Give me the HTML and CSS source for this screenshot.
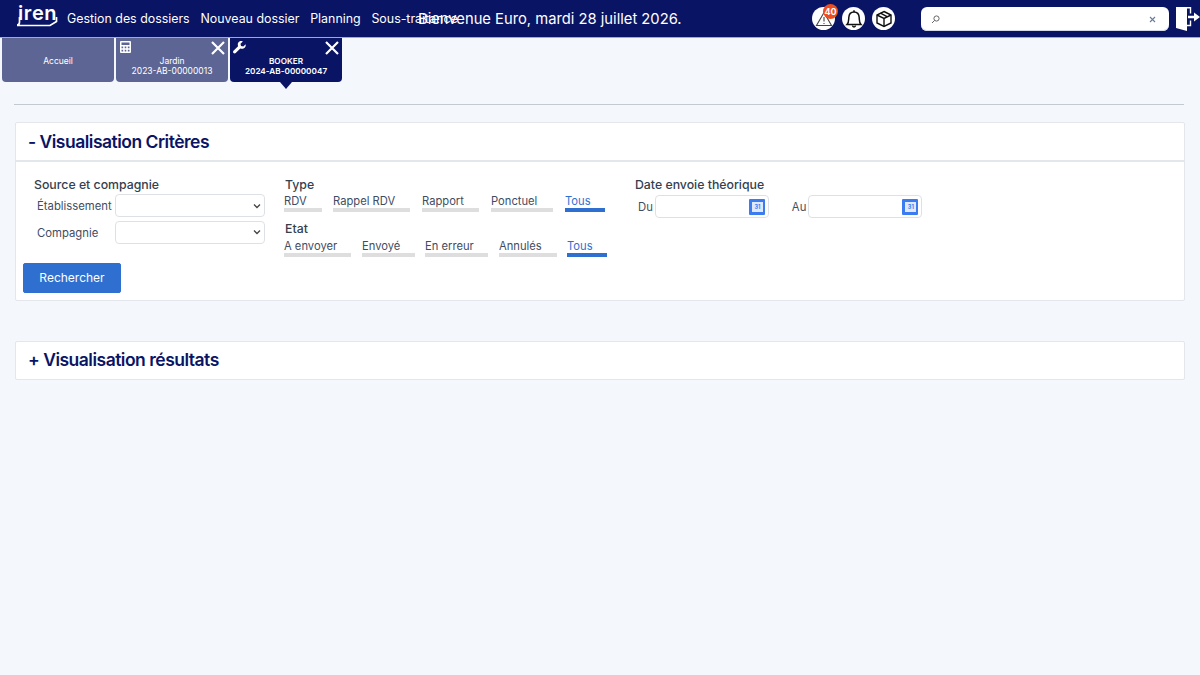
FILE: index.html
```html
<!DOCTYPE html>
<html lang="fr">
  <head>
    <meta charset="utf-8">
    <title>Iren</title>
    <link rel="stylesheet" href="styles.css">
  </head>
  <body>

    <header class="topbar">
      <a class="logo">
        <span class="logo-word">iren</span>
        <svg class="logo-line" width="42" height="10" viewBox="0 0 42 10"><path d="M1 8C3 8 3.5 7 3.5 5V0M1 8.5H34L40.5 4.5V0" fill="none" stroke="#fff" stroke-width="1.7"/></svg>
      </a>
      <nav class="menu">
        <a>Gestion des dossiers</a>
        <a>Nouveau dossier</a>
        <a>Planning</a>
        <a>Sous-traitance</a>
      </nav>
      <div class="welcome">Bienvenue Euro, mardi 28 juillet 2026.</div>

      <div class="round-icons">
        <span class="round">
          <svg width="18" height="18" viewBox="0 0 18 18" fill="none" stroke="#444" stroke-width="1.1"><path d="M9 2.5L16.5 15.5H1.5Z"/><path d="M9 7V11.5M9 13V14"/></svg>
          <b class="badge">40</b>
        </span>
        <span class="round">
          <svg width="18" height="20" viewBox="0 0 18 20" fill="none" stroke="#111" stroke-width="1.5"><path d="M2 15.5C4 13.5 3.6 11 3.8 8.5C4 5 6 3 9 3C12 3 14 5 14.2 8.5C14.4 11 14 13.5 16 15.5Z"/><path d="M7.5 16.5C7.7 18.4 10.3 18.4 10.5 16.5M9 1.2V3"/></svg>
        </span>
        <span class="round">
          <svg width="18" height="18" viewBox="0 0 18 18" fill="none" stroke="#111" stroke-width="1.4"><path d="M9 1.5L16 5V13L9 16.5L2 13V5Z"/><path d="M2 5L9 8.5L16 5M9 8.5V16.5M5.5 3.2L12.5 6.8"/></svg>
        </span>
      </div>

      <div class="search">
        <svg width="9" height="9" viewBox="0 0 9 9" fill="none" stroke="#666" stroke-width="1"><circle cx="5.5" cy="3.5" r="2.6"/><path d="M3.6 5.4L1 8"/></svg>
        <svg width="7" height="7" viewBox="0 0 7 7" fill="none" stroke="#6b7c99" stroke-width="1.1"><path d="M1 1L6 6M6 1L1 6"/></svg>
      </div>

      <svg class="logout" width="24" height="28" viewBox="0 0 24 28"><path d="M0 2H11V26L0 23Z" fill="#fff"/><path d="M11 2.7H14.5V8.5M14.5 15.5V20.5H11" fill="none" stroke="#fff" stroke-width="1.4"/><path d="M12 10.7H18V7.5L24 12L18 16.5V13.3H12Z" fill="#fff"/></svg>
    </header>

    <div class="tabs">
      <div class="tab">
        <div class="tab-text">Accueil</div>
      </div>
      <div class="tab">
        <svg class="tab-icon" width="11" height="12" viewBox="0 0 11 12"><path fill="#fff" fill-rule="evenodd" d="M1 0H10A1 1 0 0 1 11 1V11A1 1 0 0 1 10 12H1A1 1 0 0 1 0 11V1A1 1 0 0 1 1 0ZM1.5 1.5V4H9.5V1.5ZM1.5 5.5V7.2H3.2V5.5ZM4.7 5.5V7.2H6.3V5.5ZM7.8 5.5V7.2H9.5V5.5ZM1.5 8.7V10.5H3.2V8.7ZM4.7 8.7V10.5H6.3V8.7ZM7.8 8.7V10.5H9.5V8.7Z"/></svg>
        <svg class="tab-close" width="14" height="14" viewBox="0 0 14 14"><path d="M1 1L13 13M13 1L1 13" stroke="#fff" stroke-width="2.2"/></svg>
        <div class="tab-text">Jardin<br>2023-AB-00000013</div>
      </div>
      <div class="tab active">
        <svg class="tab-icon" width="13" height="13" viewBox="0 0 13 13"><path fill="#fff" d="M12.6 3.2L10.3 5.5L8 5L7.5 2.7L9.8 0.4C8 -0.3 6 0.3 5.2 1.8C4.6 2.9 4.7 4.2 5.1 5.2L0.5 9.8C-0.1 10.4 -0.1 11.4 0.5 12C1.1 12.6 2.1 12.6 2.7 12L7.3 7.4C8.4 7.9 9.8 7.9 10.9 7.2C12.4 6.3 13 4.8 12.6 3.2Z"/></svg>
        <svg class="tab-close" width="14" height="14" viewBox="0 0 14 14"><path d="M1 1L13 13M13 1L1 13" stroke="#fff" stroke-width="2.2"/></svg>
        <div class="tab-text">BOOKER<br>2024-AB-00000047</div>
      </div>
    </div>

    <hr class="sep">

    <section class="panel">
      <h2 class="panel-head">- Visualisation Critères</h2>
      <div class="panel-body">
        <div class="criteria">
          <div class="col-source">
            <h3>Source et compagnie</h3>
            <div class="field">
              <label>Établissement</label>
              <select></select>
            </div>
            <div class="field">
              <label>Compagnie</label>
              <select></select>
            </div>
          </div>

          <div class="col-filters">
            <h3>Type</h3>
            <div class="pills type-pills">
              <a>RDV</a>
              <a>Rappel RDV</a>
              <a>Rapport</a>
              <a>Ponctuel</a>
              <a class="on">Tous</a>
            </div>
            <h3 class="etat-title">Etat</h3>
            <div class="pills etat-pills">
              <a>A envoyer</a>
              <a>Envoyé</a>
              <a>En erreur</a>
              <a>Annulés</a>
              <a class="on">Tous</a>
            </div>
          </div>

          <div class="col-dates">
            <h3>Date envoie théorique</h3>
            <div class="dates">
              <label>Du</label>
              <div class="date-input"><span class="cal">31</span></div>
              <label class="au">Au</label>
              <div class="date-input"><span class="cal">31</span></div>
            </div>
          </div>
        </div>
        <button class="btn-search">Rechercher</button>
      </div>
    </section>

    <section class="panel panel-results">
      <h2 class="panel-head">+ Visualisation résultats</h2>
    </section>

  </body>
</html>
```

FILE: styles.css
```css
*,
*:before,
*:after {
  box-sizing: border-box;
}

html,
body {
  margin: 0;
  padding: 0;
  height: 100%;
  overflow: hidden;
  background: #f4f7fb;
  font-family: Inter, "Noto Sans", sans-serif;
  color: #3f4d62;
}

h2,
h3 {
  margin: 0;
}

/* top bar */
.topbar {
  position: relative;
  display: flex;
  align-items: center;
  height: 37px;
  padding-left: 16px;
  background: #0a1464;
  color: #fff;
  box-shadow: 0 1px 0 #a5a8c6;
}

.logo {
  position: relative;
  width: 41px;
  height: 37px;
}

.logo-word {
  position: absolute;
  left: 2px;
  top: 1px;
  font-size: 20px;
  font-weight: 600;
  line-height: 24px;
  letter-spacing: 0.6px;
}

.logo-line {
  position: absolute;
  left: 0;
  top: 17px;
}

.menu {
  display: flex;
  gap: 10.8px;
  margin-left: 10px;
  font-size: 12.4px;
  white-space: nowrap;
}

.welcome {
  position: absolute;
  left: 418px;
  top: 10px;
  font-size: 14.75px;
  line-height: 18px;
  white-space: nowrap;
}

.round-icons {
  position: absolute;
  left: 812px;
  top: 7px;
  display: flex;
  gap: 7px;
}

.round {
  position: relative;
  display: flex;
  align-items: center;
  justify-content: center;
  width: 23px;
  height: 23px;
  border-radius: 50%;
  background: #fff;
}

.badge {
  position: absolute;
  left: 11px;
  top: -3px;
  width: 15px;
  height: 15px;
  border-radius: 50%;
  background: #ee4d1f;
  color: #fff;
  font-size: 9px;
  line-height: 15px;
  text-align: center;
}

.search {
  position: absolute;
  left: 921px;
  top: 7px;
  display: flex;
  align-items: center;
  justify-content: space-between;
  width: 248px;
  height: 24px;
  padding: 0 13px 0 10px;
  border-radius: 6px;
  background: #fff;
  box-shadow: inset 0 -1px 0 #d5d8e6;
}

.logout {
  position: absolute;
  left: 1176px;
  top: 5px;
}

/* tabs */
.tabs {
  display: flex;
  gap: 1.3px;
  height: 45px;
  margin-top: 1px;
  padding-left: 1.7px;
}

.tab {
  position: relative;
  width: 112.7px;
  height: 44px;
  padding-top: 18px;
  border-radius: 0 0 4px 4px;
  background: #5d6594;
  color: #fff;
  font-size: 8.5px;
  line-height: 10px;
  text-align: center;
}

.tab.active {
  background: #0a1464;
  font-size: 8.2px;
  font-weight: 600;
}

.tab.active:after {
  content: "";
  position: absolute;
  left: 50%;
  bottom: -7px;
  margin-left: -6px;
  border-left: 6px solid transparent;
  border-right: 6px solid transparent;
  border-top: 7px solid #0a1464;
}

.tab-icon {
  position: absolute;
  left: 4px;
  top: 3px;
}

.tab.active .tab-icon {
  left: 3px;
}

.tab-close {
  position: absolute;
  right: 3px;
  top: 3px;
}

.sep {
  height: 1px;
  margin: 21px 16px 17px 14px;
  border: 0;
  background: #c3c9d1;
}

/* panels */
.panel {
  margin: 0 15px;
  border: 1px solid #e3e6ea;
  border-radius: 2px;
  background: #fff;
}

.panel-results {
  margin-top: 40px;
}

.panel-head {
  height: 37px;
  padding-left: 12px;
  color: #0a1464;
  font-size: 17.5px;
  font-weight: 600;
  letter-spacing: -0.5px;
  line-height: 38px;
}

.panel-results .panel-head {
  height: 36.5px;
  line-height: 36px;
}

.panel-body {
  padding: 16px 7px 7.5px;
  border-top: 2px solid #e3e6ea;
}

.criteria {
  display: flex;
  height: 85px;
}

h3 {
  color: #343f50;
  font-size: 12.3px;
  font-weight: 500;
  line-height: 14px;
}

.col-source {
  width: 262px;
  padding-left: 11px;
}

.col-source .field {
  display: flex;
  align-items: center;
  height: 23px;
  margin-top: 3.5px;
  margin-left: -11px;
}

.col-source h3 + .field {
  margin-top: 2px;
}

.field label {
  width: 92px;
  padding-top: 1px;
  padding-left: 14px;
  font-size: 11.3px;
  white-space: nowrap;
}

select {
  width: 150px;
  height: 23px;
  border: 1px solid #dde1e6;
  border-radius: 4px;
  background: #fff url("data:image/svg+xml,%3Csvg xmlns='http://www.w3.org/2000/svg' width='8' height='6'%3E%3Cpath d='M1 1.5L4 4.5L7 1.5' fill='none' stroke='%23444' stroke-width='1.3'/%3E%3C/svg%3E") no-repeat right 3px center;
  color: #333;
  appearance: none;
}

.col-filters {
  width: 350px;
}

.pills {
  display: flex;
  margin-left: -1px;
  font-size: 11.2px;
  line-height: 16px;
}

.pills a {
  display: block;
  height: 19px;
  border-bottom: 4px solid #dedede;
}

.pills a.on {
  border-bottom-color: #2f6fd0;
  color: #2f6fd0;
}

.type-pills {
  margin-top: 1px;
}

.type-pills a:nth-child(1) { width: 38px; margin-right: 11px; }
.type-pills a:nth-child(2) { width: 77px; margin-right: 12px; }
.type-pills a:nth-child(3) { width: 57px; margin-right: 12px; }
.type-pills a:nth-child(4) { width: 62px; margin-right: 12px; }
.type-pills a:nth-child(5) { width: 40px; }

.etat-pills {
  margin-top: 2px;
}

.etat-pills a:nth-child(1) { width: 67px; margin-right: 11px; }
.etat-pills a:nth-child(2) { width: 53px; margin-right: 10px; }
.etat-pills a:nth-child(3) { width: 63px; margin-right: 11px; }
.etat-pills a:nth-child(4) { width: 58px; margin-right: 10px; }
.etat-pills a:nth-child(5) { width: 40px; }

.etat-title {
  margin-top: 10px;
}

.dates {
  display: flex;
  align-items: center;
  margin-top: 3px;
  font-size: 11.3px;
}

.dates label {
  margin-left: 3px;
  margin-right: 2px;
}

.dates .au {
  margin-left: 23px;
  margin-right: 2px;
}

.date-input {
  display: flex;
  align-items: center;
  justify-content: flex-end;
  width: 114px;
  height: 23px;
  padding-right: 3px;
  border: 1px solid #dde1e6;
  border-radius: 4px;
  background: #fff;
}

.cal {
  width: 16px;
  height: 16px;
  border: 3px solid #3b7cf0;
  border-right-width: 2px;
  border-radius: 1px;
  background: #dfe9fb;
  color: #3b7cf0;
  font-size: 5.5px;
  font-weight: 700;
  line-height: 10px;
  text-align: center;
}

.btn-search {
  display: block;
  width: 98px;
  height: 29.5px;
  padding: 0;
  border: 1px solid #2f6fd0;
  border-radius: 2px;
  background: #2f6fd0;
  color: #fff;
  font-family: inherit;
  font-size: 12px;
}
```
